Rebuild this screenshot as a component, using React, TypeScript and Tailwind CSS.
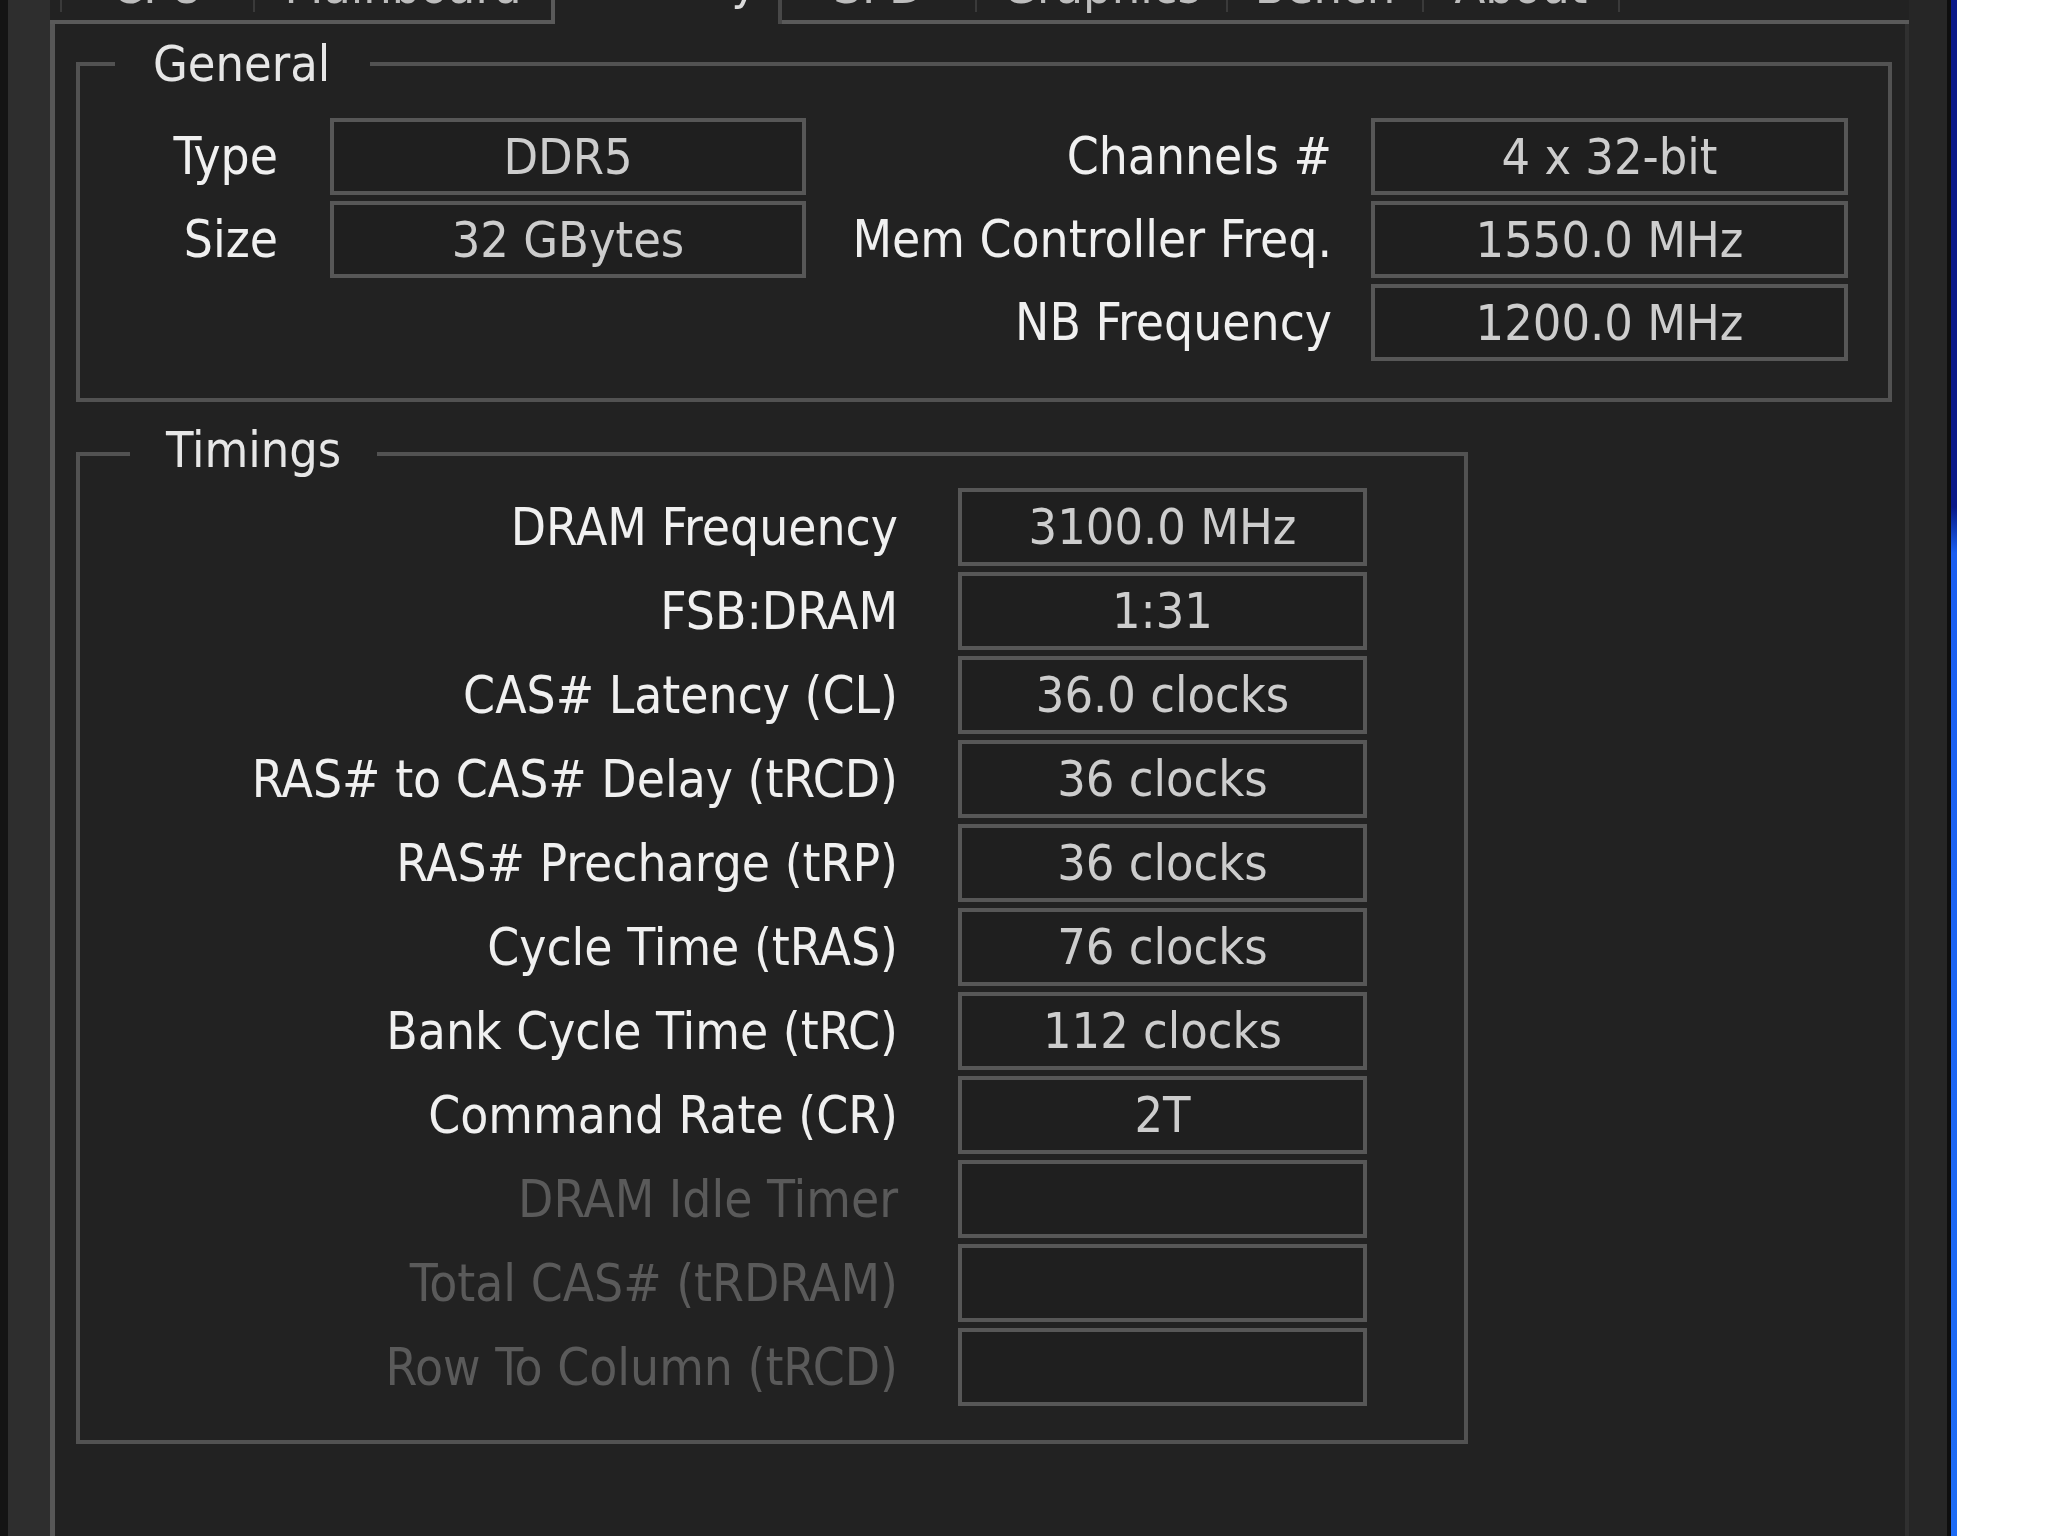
import React from "react";

const tabs = [
  { name: "CPU", w: "w-[195px]", edge: "border-l-2 border-r-2" },
  { name: "Mainboard", w: "w-[296px]", edge: "" },
  { name: "Memory", w: "w-[231px]", selected: true },
  { name: "SPD", w: "w-[195px]", edge: "border-r-2" },
  { name: "Graphics", w: "w-[251px]", edge: "border-r-2" },
  { name: "Bench", w: "w-[196px]", edge: "border-r-2" },
  { name: "About", w: "w-[196px]", edge: "border-r-2" },
];

const timings: { label: string; value?: string; off?: boolean }[] = [
  { label: "DRAM Frequency", value: "3100.0 MHz" },
  { label: "FSB:DRAM", value: "1:31" },
  { label: "CAS# Latency (CL)", value: "36.0 clocks" },
  { label: "RAS# to CAS# Delay (tRCD)", value: "36 clocks" },
  { label: "RAS# Precharge (tRP)", value: "36 clocks" },
  { label: "Cycle Time (tRAS)", value: "76 clocks" },
  { label: "Bank Cycle Time (tRC)", value: "112 clocks" },
  { label: "Command Rate (CR)", value: "2T" },
  { label: "DRAM Idle Timer", off: true },
  { label: "Total CAS# (tRDRAM)", off: true },
  { label: "Row To Column (tRCD)", off: true },
];

function Field({ value, h = "h-[78px]" }: { value?: string; h?: string }) {
  return (
    <div className={`${h} border-4 border-[#575757] bg-[#1f1f1f] flex items-center justify-center text-[50px] text-[#cdcdcd] whitespace-nowrap`}>
      {value}
    </div>
  );
}

function Label({ text, off, pr }: { text: string; off?: boolean; pr: string }) {
  return (
    <div className={`flex items-center justify-end whitespace-nowrap text-[51px] ${pr} ${off ? "text-[#5a5a5a]" : "text-[#f0f0f0]"}`}>
      {text}
    </div>
  );
}

export default function App() {
  return (
    <div className="w-[2048px] h-[1536px] overflow-hidden bg-white flex font-['DejaVu_Sans_Condensed','DejaVu_Sans',sans-serif] font-stretch-condensed text-[50px] leading-none">
      {/* left window frame */}
      <div className="w-[8px] bg-[#141414]" />
      <div className="w-[42px] bg-[#2e2e2e]" />

      {/* main dialog area */}
      <div className="w-[1859px] flex flex-col bg-[#222222]">
        {/* tab strip, mostly scrolled out above */}
        <div className="h-[84px] -mt-[60px] flex shrink-0">
          <div className="w-[10px] border-b-4 border-[#5a5a5a]" />
          {tabs.map((t) =>
            t.selected ? (
              <div
                key={t.name}
                className={`${t.w} border-l-4 border-r-4 border-l-[#5a5a5a] border-r-[#484848] flex items-end justify-center pb-[17px] text-[#dadada]`}
              >
                {t.name}
              </div>
            ) : (
              <div key={t.name} className={`${t.w} flex flex-col border-b-4 border-[#5a5a5a]`}>
                <div className={`flex-1 mb-[8px] flex items-end justify-center pb-[1px] text-[#bdbdbd] border-[#3a3a3a] ${t.edge}`}>
                  {t.name}
                </div>
              </div>
            )
          )}
          <div className="flex-1 border-b-4 border-[#5a5a5a]" />
        </div>

        {/* memory panel */}
        <div className="flex-1 border-l-[5px] border-l-[#575757] border-r-4 border-r-[#303030] pl-[21px]">
          <fieldset className="mt-[15px] w-[1816px] h-[363px] min-w-0 border-4 border-[#525252] pt-[29px]">
            <legend className="ml-[35px] pl-[38px] pr-[40px] text-[#e6e6e6]">General</legend>
            <div className="grid grid-cols-[250px_476px_565px_477px] auto-rows-[77px] gap-y-[6px]">
              <Label text="Type" pr="pr-[52px]" />
              <Field value="DDR5" h="h-[77px]" />
              <Label text="Channels #" pr="pr-[39px]" />
              <Field value="4 x 32-bit" h="h-[77px]" />

              <Label text="Size" pr="pr-[52px]" />
              <Field value="32 GBytes" h="h-[77px]" />
              <Label text="Mem Controller Freq." pr="pr-[39px]" />
              <Field value="1550.0 MHz" h="h-[77px]" />

              <div />
              <div />
              <Label text="NB Frequency" pr="pr-[39px]" />
              <Field value="1200.0 MHz" h="h-[77px]" />
            </div>
          </fieldset>

          <fieldset className="mt-[27px] w-[1392px] h-[1015px] min-w-0 border-4 border-[#525252] pt-[9px]">
            <legend className="ml-[50px] pl-[36px] pr-[36px] text-[#e6e6e6] -translate-y-[4px]">Timings</legend>
            <div className="grid grid-cols-[878px_409px] auto-rows-[78px] gap-y-[6px]">
              {timings.map((r) => (
                <React.Fragment key={r.label}>
                  <Label text={r.label} off={r.off} pr="pr-[60px]" />
                  <Field value={r.value} />
                </React.Fragment>
              ))}
            </div>
          </fieldset>
        </div>
      </div>

      {/* right window frame */}
      <div className="w-[38px] bg-[#262626]" />
      <div className="w-[4px] bg-[#0e0e0e]" />
      <div className="w-[6px] bg-linear-to-b from-[#0a1888] from-33% via-[#1b5ef0] via-36% to-[#1e6cf5]" />
      <div className="flex-1 bg-white" />
    </div>
  );
}
